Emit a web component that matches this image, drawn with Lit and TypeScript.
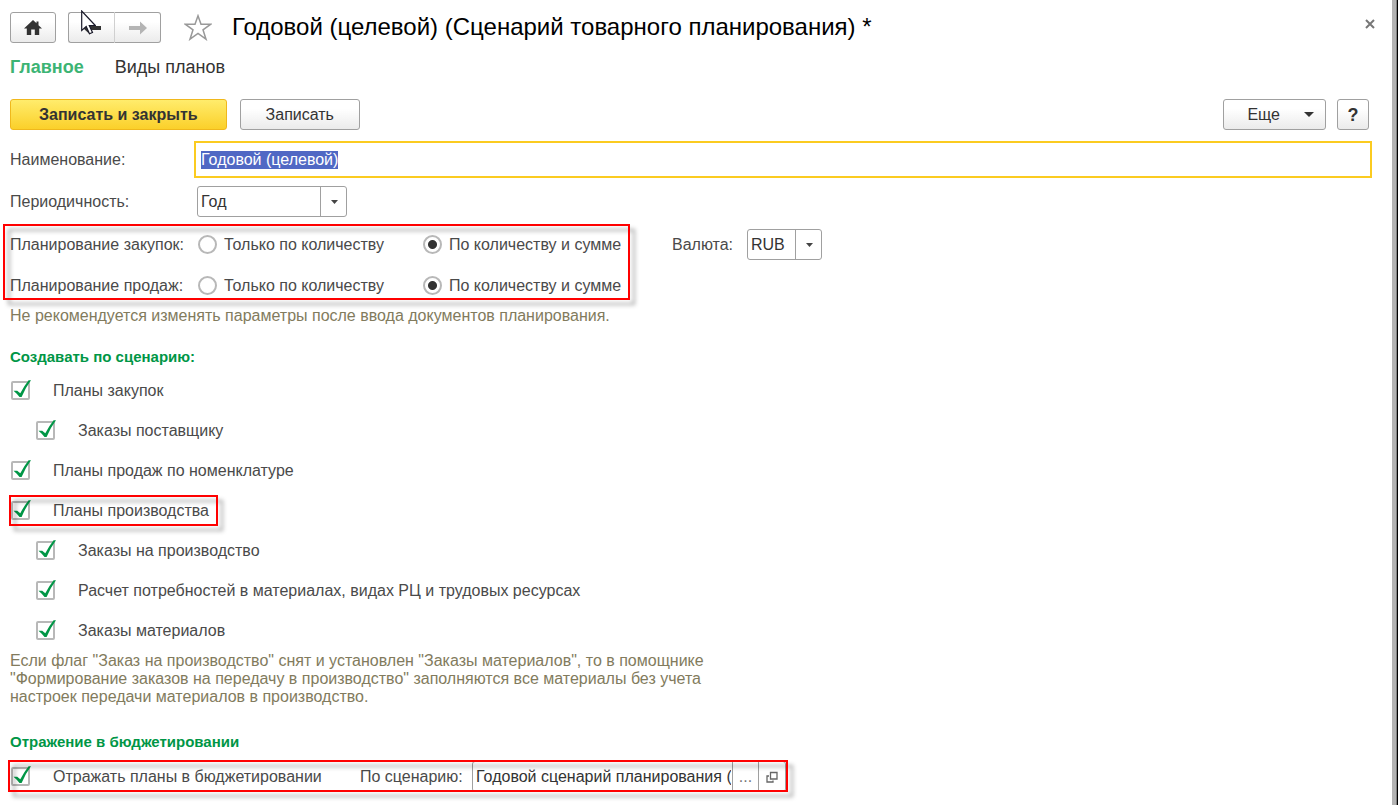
import { LitElement, html, css, svg } from "lit";
import { customElement, query } from "lit/decorators.js";
import { classMap } from "lit/directives/class-map.js";

const controls = css`
  :host {
    display: block;
    font-family: "Liberation Sans", Arial, sans-serif;
    font-size: 16px;
    line-height: 18px;
    color: #4a4a4a;
  }
  * {
    box-sizing: border-box;
  }
  button,
  input,
  select {
    margin: 0;
    font: inherit;
    color: #333;
  }
`;

@customElement("check-item")
class CheckItem extends LitElement {
  static properties = { label: { type: String } };
  declare label: string;

  static styles = [
    controls,
    css`
      .item {
        display: flex;
        align-items: flex-start;
        gap: 23px;
        line-height: 22px;
        padding-left: 1px;
        white-space: nowrap;
      }
      .mark {
        display: grid;
        flex: none;
        margin-top: 1px;
      }
      .mark > * {
        grid-area: 1 / 1;
        width: 19px;
        height: 19px;
      }
      input {
        appearance: none;
        border: 2px solid #b8b8b8;
        border-radius: 2px;
        background: #fff;
      }
      svg {
        overflow: visible;
        pointer-events: none;
        fill: #009646;
        visibility: hidden;
      }
      input:checked + svg {
        visibility: visible;
      }
    `,
  ];

  render() {
    return html`<label class="item">
      <span class="mark">
        <input type="checkbox" checked />
        <svg viewBox="0 0 19 19" aria-hidden="true">
          <path d="M2.500 9.800H6.200L9.300 12.200Q13 5 17.600-.8H20Q14.500 6.500 10.600 16H8.500Q6 12.800 2.500 9.800z" />
        </svg>
      </span>
      <span>${this.label}</span>
    </label>`;
  }
}

@customElement("drop-down")
class DropDown extends LitElement {
  static properties = { label: { type: String }, value: { type: String } };
  declare label: string;
  declare value: string;

  static styles = [
    controls,
    css`
      .box {
        display: grid;
        grid-template-columns: 1fr 27px;
        height: 31px;
      }
      select {
        grid-area: 1 / 1 / 2 / 3;
        appearance: none;
        padding: 0 27px 0 3px;
        border: 1px solid #a0a0a0;
        border-radius: 3px;
        background: #fff;
        outline: none;
      }
      .arrow {
        grid-area: 1 / 2;
        display: grid;
        place-items: center;
        border-left: 1px solid #a0a0a0;
        pointer-events: none;
        z-index: 1;
      }
    `,
  ];

  render() {
    return html`<div class="box">
      <select aria-label=${this.label}>
        <option>${this.value}</option>
      </select>
      <span class="arrow">
        <svg width="7" height="4" viewBox="0 0 7 4"><path d="M0 0h7L3.5 4z" fill="#444" /></svg>
      </span>
    </div>`;
  }
}

const arrow = (dir: "left" | "right") =>
  dir === "left"
    ? svg`<path d="M0 7 7 .5V5h11v4H7v4.500z" fill="#333" />`
    : svg`<path d="M18 7 11 .5V5H0v4h11v4.500z" fill="#b4b4b4" />`;

const PLANS = [
  { label: "Планы закупок" },
  { label: "Заказы поставщику", nested: true },
  { label: "Планы продаж по номенклатуре" },
  { label: "Планы производства", framed: true },
  { label: "Заказы на производство", nested: true },
  { label: "Расчет потребностей в материалах, видах РЦ и трудовых ресурсах", nested: true },
  { label: "Заказы материалов", nested: true },
];

@customElement("app-root")
class AppRoot extends LitElement {
  @query("#name") nameInput!: HTMLInputElement;

  static styles = [
    controls,
    css`
      .window {
        min-height: 100vh;
        padding: 12px 28px 12px 10px;
        background: #fff;
        border-right: 1px solid #000;
        box-shadow: inset -1px 0 #808080, inset -5px 0 #b4b4b4;
        overflow: hidden;
      }
      header {
        display: flex;
        align-items: center;
        height: 31px;
        margin-right: -6px;
      }
      button {
        display: inline-flex;
        align-items: center;
        justify-content: center;
        height: 31px;
        border: 1px solid #a0a0a0;
        border-radius: 3px;
        background: linear-gradient(#fff 30%, #ebebeb);
        padding: 0 25px;
      }
      .home {
        width: 46px;
        padding: 0;
      }
      .history {
        position: relative;
        display: flex;
        margin-left: 12px;
      }
      .history button {
        width: 47px;
        padding: 0;
      }
      .history button:first-child {
        border-radius: 3px 0 0 3px;
        border-right-color: #d0d0d0;
      }
      .history button:nth-child(2) {
        width: 46px;
        border-left: 0;
        border-radius: 0 3px 3px 0;
      }
      .pointer {
        position: absolute;
        left: 13px;
        top: -2px;
      }
      .star {
        width: 28px;
        margin-left: 23px;
        padding: 0;
        border: 0;
        background: none;
      }
      h1 {
        flex: 1;
        margin: 0 0 2px 20px;
        font-size: 24px;
        line-height: 28px;
        font-weight: 400;
        color: #000;
        white-space: nowrap;
      }
      .close {
        width: 10px;
        height: 10px;
        padding: 0;
        border: 0;
        background: none;
        align-self: flex-start;
        margin-top: 7px;
      }
      nav {
        display: flex;
        gap: 31px;
        margin-top: 14px;
        font-size: 18px;
        line-height: 20px;
      }
      nav a {
        color: #333;
        text-decoration: none;
      }
      nav .current {
        color: #3cb474;
        font-weight: 700;
      }
      .commands {
        display: flex;
        margin: 22px 0 14px;
      }
      .commands .primary {
        padding: 0 28px;
        margin-right: 13px;
        border-color: #f0b81c;
        background: linear-gradient(#ffec6c, #fbd02a);
        font-weight: 700;
      }
      .commands .more {
        margin-left: auto;
        padding: 0 11px 0 23px;
        gap: 24px;
      }
      .commands .help {
        width: 32px;
        margin-left: 11px;
        padding: 0;
        font-size: 18px;
        font-weight: 700;
      }
      .field {
        display: grid;
        grid-template-columns: 187px 1fr;
        align-items: center;
        height: 31px;
        margin-bottom: 11px;
      }
      #name {
        width: 100%;
        height: 31px;
        padding: 0 3px;
        border: 1px solid #fff;
        outline: none;
      }
      #name:focus {
        outline: 2px solid #fbcb20;
        outline-offset: 1px;
      }
      #name::selection {
        background: #5068c4;
        color: #fff;
      }
      .period {
        width: 150px;
      }
      .planning {
        display: flex;
        align-items: flex-start;
        padding-top: 1px;
      }
      .framed {
        position: relative;
      }
      .framed::after {
        content: "";
        position: absolute;
        inset: -5px -9px -4px -1px;
        border: 2px solid #f00;
        filter: drop-shadow(5px 5px 2px rgba(0, 0, 0, 0.36));
        pointer-events: none;
        z-index: 2;
      }
      .modes {
        display: grid;
        gap: 10px;
      }
      .modes.framed::after {
        inset: -5px -15px 1px -7px;
      }
      .mode {
        display: grid;
        grid-template-columns: 188px 225px 192px;
        align-items: center;
        height: 31px;
        white-space: nowrap;
      }
      .mode label {
        display: flex;
        align-items: center;
        gap: 7px;
      }
      input[type="radio"] {
        flex: none;
        appearance: none;
        width: 19px;
        height: 19px;
        border: 2px solid #b8b8b8;
        border-radius: 50%;
        background: #fff;
      }
      input[type="radio"]:checked {
        background: radial-gradient(circle, #333 4px, #fff 5px);
      }
      .currency {
        display: grid;
        grid-template-columns: 60px 75px;
        align-items: center;
        gap: 15px;
        margin-left: 57px;
      }
      .note {
        margin: 6px 0 0;
        color: #827b5d;
      }
      h2 {
        margin: 23px 0 14px;
        font-size: 15px;
        line-height: 18px;
        font-weight: 700;
        color: #009646;
      }
      .plans {
        display: grid;
        justify-items: start;
        gap: 18px;
        margin-bottom: 10px;
      }
      .nested {
        margin-left: 25px;
      }
      .long {
        max-width: 700px;
      }
      .budget-title {
        margin: 27px 0 10px;
      }
      .budget {
        display: grid;
        grid-template-columns: 350px 112px auto;
        align-items: center;
        width: fit-content;
        white-space: nowrap;
      }
      .budget.framed::after {
        inset: -1px -2px 0 -2px;
      }
      .lookup {
        display: grid;
        grid-template-columns: 259px 26px 27px;
        height: 31px;
        border: 1px solid #a0a0a0;
        border-radius: 3px;
      }
      .lookup input {
        min-width: 0;
        margin-right: 1px;
        padding: 0 0 0 3px;
        border: 0;
        background: none;
        outline: none;
      }
      .lookup button {
        height: 29px;
        padding: 0;
        border: 0;
        border-left: 1px solid #a0a0a0;
        border-radius: 0;
        background: none;
        color: #777;
      }
    `,
  ];

  firstUpdated() {
    this.nameInput.focus({ preventScroll: true });
    this.nameInput.select();
  }

  private mode(title: string, name: string) {
    return html`<div class="mode" role="radiogroup" aria-label=${title}>
      <span>${title}</span>
      <label><input type="radio" name=${name} />Только по количеству</label>
      <label><input type="radio" name=${name} checked />По количеству и сумме</label>
    </div>`;
  }

  render() {
    return html`<main class="window">
      <header>
        <button class="home" aria-label="Домой">
          <svg width="18" height="15" viewBox="0 0 18 15">
            <path d="M9 0 0 8.500h2.800V15H7.200V9.500h3.600V15h4.400V8.500H18L14.500 5.200V1.500h-2v1.800z" fill="#333" />
          </svg>
        </button>
        <div class="history">
          <button aria-label="Назад"><svg width="18" height="14" viewBox="0 0 18 14">${arrow("left")}</svg></button>
          <button aria-label="Вперед"><svg width="18" height="14" viewBox="0 0 18 14">${arrow("right")}</svg></button>
          <svg class="pointer" width="15" height="25" viewBox="0 0 15 25">
            <path d="M.7 1v19.500l4.500-4 3.300 7.300 3-1.300-3.200-7H14.300z" fill="#fff" stroke="#1a1a2a" stroke-width="1.200" />
          </svg>
        </div>
        <button class="star" aria-label="В избранное">
          <svg width="28" height="27" viewBox="0 0 28 27">
            <path
              d="M14 1.800 17 10.300H26.500L19 15.800 22 25.200 14 19.500 6 25.200 9 15.800 1.500 10.300H11z"
              fill="#fff" stroke="#999" stroke-width="1.500" />
          </svg>
        </button>
        <h1>Годовой (целевой) (Сценарий товарного планирования) *</h1>
        <button class="close" aria-label="Закрыть">
          <svg width="10" height="10" viewBox="0 0 10 10">
            <path d="M1 1 9 9M9 1 1 9" stroke="#777" stroke-width="2" />
          </svg>
        </button>
      </header>

      <nav>
        <a class="current" href="#main">Главное</a>
        <a href="#kinds">Виды планов</a>
      </nav>

      <div class="commands">
        <button class="primary">Записать и закрыть</button>
        <button>Записать</button>
        <button class="more">
          Еще
          <svg width="10" height="5" viewBox="0 0 10 5"><path d="M0 0h10L5 5z" fill="#333" /></svg>
        </button>
        <button class="help">?</button>
      </div>

      <div class="field">
        <label for="name">Наименование:</label>
        <input id="name" type="text" value="Годовой (целевой)" />
      </div>
      <div class="field">
        <span>Периодичность:</span>
        <drop-down class="period" label="Периодичность" value="Год"></drop-down>
      </div>

      <div class="planning">
        <div class="modes framed">
          ${this.mode("Планирование закупок:", "purchase")} ${this.mode("Планирование продаж:", "sales")}
        </div>
        <div class="currency">
          <span>Валюта:</span>
          <drop-down label="Валюта" value="RUB"></drop-down>
        </div>
      </div>
      <p class="note">Не рекомендуется изменять параметры после ввода документов планирования.</p>

      <h2>Создавать по сценарию:</h2>
      <div class="plans">
        ${PLANS.map(
          (p) => html`<check-item
            class=${classMap({ nested: !!p.nested, framed: !!p.framed })}
            label=${p.label}
          ></check-item>`
        )}
      </div>
      <p class="note long">
        Если флаг "Заказ на производство" снят и установлен "Заказы материалов", то в помощнике "Формирование заказов
        на передачу в производство" заполняются все материалы без учета настроек передачи материалов в производство.
      </p>

      <h2 class="budget-title">Отражение в бюджетировании</h2>
      <div class="budget framed">
        <check-item label="Отражать планы в бюджетировании"></check-item>
        <label for="scenario">По сценарию:</label>
        <div class="lookup">
          <input id="scenario" type="text" value="Годовой сценарий планирования (целевой)" />
          <button aria-label="Выбрать">...</button>
          <button aria-label="Открыть">
            <svg width="12" height="12" viewBox="0 0 12 12" fill="none" stroke="#666" stroke-width="1.300">
              <path d="M4.500 1.500h6.500v6.500h-6.500zM3 5H1v6h6V9.500" />
            </svg>
          </button>
        </div>
      </div>
    </main>`;
  }
}
